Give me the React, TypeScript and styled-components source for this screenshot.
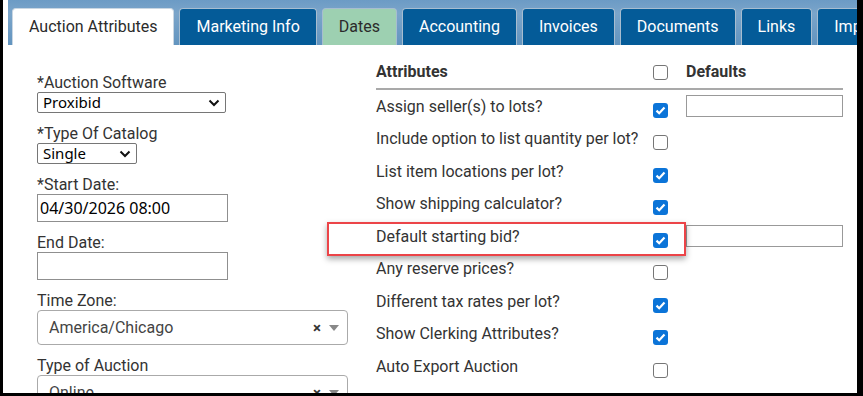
import React from 'react'
import styled, { createGlobalStyle } from 'styled-components'

const GlobalStyle = createGlobalStyle`
  html, body {
    margin: 0;
    padding: 0;
    background: #fff;
  }
  body {
    font-family: Roboto, "Liberation Sans", Arial, sans-serif;
    color: #333;
  }
  * {
    box-sizing: border-box;
  }
`

const tabs = [
  { label: 'Auction Attributes', kind: 'active' },
  { label: 'Marketing Info', kind: 'blue' },
  { label: 'Dates', kind: 'green' },
  { label: 'Accounting', kind: 'blue' },
  { label: 'Invoices', kind: 'blue' },
  { label: 'Documents', kind: 'blue' },
  { label: 'Links', kind: 'blue' },
  { label: 'Import', kind: 'blue' },
]

const attributes = [
  { label: 'Assign seller(s) to lots?', checked: true, input: true },
  { label: 'Include option to list quantity per lot?', checked: false },
  { label: 'List item locations per lot?', checked: true },
  { label: 'Show shipping calculator?', checked: true },
  { label: 'Default starting bid?', checked: true, input: true },
  { label: 'Any reserve prices?', checked: false },
  { label: 'Different tax rates per lot?', checked: true },
  { label: 'Show Clerking Attributes?', checked: true },
  { label: 'Auto Export Auction', checked: false },
]

const Chevron = () => (
  <svg width="12" height="8" viewBox="0 0 12 8">
    <path d="M1.5 1.5 L6 6 L10.5 1.5" fill="none" stroke="#111" strokeWidth="2" />
  </svg>
)

const Check = ({ checked }: { checked: boolean }) => (
  <CheckBox checked={checked}>
    {checked && (
      <svg width="11" height="9" viewBox="0 0 11 9">
        <path d="M1.5 4.6 L4.2 7.2 L9.5 1.6" fill="none" stroke="#fff" strokeWidth="2.2" />
      </svg>
    )}
  </CheckBox>
)

const App = () => {
  return (
    <Frame>
      <GlobalStyle />
      <TabBar>
        {tabs.map((t) => (
          <Tab key={t.label} kind={t.kind}>
            {t.label}
          </Tab>
        ))}
      </TabBar>
      <Content>
        <LeftCol>
          <Field>
            <Label>*Auction Software</Label>
            <SelectWrap>
              <NativeSelect w={189} defaultValue="Proxibid">
                <option>Proxibid</option>
              </NativeSelect>
              <ChevronSlot>
                <Chevron />
              </ChevronSlot>
            </SelectWrap>
          </Field>
          <Field>
            <Label>*Type Of Catalog</Label>
            <SelectWrap>
              <NativeSelect w={100} defaultValue="Single">
                <option>Single</option>
              </NativeSelect>
              <ChevronSlot>
                <Chevron />
              </ChevronSlot>
            </SelectWrap>
          </Field>
          <Field>
            <Label>*Start Date:</Label>
            <TextInput defaultValue="04/30/2026 08:00" />
          </Field>
          <Field>
            <Label>End Date:</Label>
            <TextInput defaultValue="" />
          </Field>
          <Field>
            <Label>Time Zone:</Label>
            <Select2>
              <Select2Text>America/Chicago</Select2Text>
              <Clear>×</Clear>
              <Caret />
            </Select2>
          </Field>
          <Field>
            <Label>Type of Auction</Label>
            <Select2>
              <Select2Text>Online</Select2Text>
              <Clear>×</Clear>
              <Caret />
            </Select2>
          </Field>
        </LeftCol>
        <RightCol>
          <HeaderRow>
            <HeadCell>Attributes</HeadCell>
            <BoxCell>
              <Check checked={false} />
            </BoxCell>
            <HeadCell>Defaults</HeadCell>
          </HeaderRow>
          {attributes.map((a) => (
            <AttrRow key={a.label}>
              <AttrText>{a.label}</AttrText>
              <BoxCell offset>
                <Check checked={a.checked} />
              </BoxCell>
              <div>{a.input && <DefaultInput />}</div>
            </AttrRow>
          ))}
        </RightCol>
        <Highlight />
      </Content>
    </Frame>
  )
}

const Frame = styled.div`
  width: 863px;
  height: 396px;
  overflow: hidden;
  background: #fff;
  border-left: 3px solid #000;
  border-right: 6px solid #000;
  border-bottom: 3px solid #000;
`

const TabBar = styled.div`
  display: flex;
  align-items: flex-end;
  gap: 5px;
  height: 45px;
  margin-left: 5px;
  padding: 8px 0 0 4px;
  overflow: hidden;
  background: linear-gradient(to bottom, #6c9bc5 0%, #7ba5ca 30%, #6294bf 100%);
`

const Tab = styled.div<{ kind: string }>`
  flex-shrink: 0;
  display: flex;
  align-items: center;
  height: 37px;
  padding: 0 16px 1px;
  border: 1px solid ${(p) => (p.kind === 'active' ? '#c9d6e2' : '#a7bdd0')};
  border-bottom: 0;
  border-radius: 4px 4px 0 0;
  font-size: 16px;
  white-space: nowrap;
  background: ${(p) =>
    p.kind === 'active' ? '#fff' : p.kind === 'green' ? '#9dd0b1' : '#045b98'};
  color: ${(p) => (p.kind === 'blue' ? '#fff' : '#2b2b2b')};
`

const Content = styled.div`
  position: relative;
  display: flex;
  padding: 17px 0 0 34px;
`

const LeftCol = styled.div`
  flex-shrink: 0;
  width: 311px;
  margin-right: 28px;
  padding-top: 11px;
`

const Field = styled.div`
  margin-bottom: 11px;
`

const Label = styled.div`
  font-size: 16px;
  line-height: 19px;
  color: #333;
`

const SelectWrap = styled.div`
  position: relative;
  display: inline-block;
`

const NativeSelect = styled.select<{ w: number }>`
  appearance: none;
  display: block;
  width: ${(p) => p.w}px;
  height: 21px;
  padding: 0 0 0 5px;
  border: 1px solid #767676;
  border-radius: 2px;
  background: #fff;
  color: #000;
  font-family: "Noto Sans", "DejaVu Sans", sans-serif;
  font-size: 15px;
  line-height: 19px;
`

const ChevronSlot = styled.span`
  position: absolute;
  right: 6px;
  top: 7px;
  display: flex;
  pointer-events: none;
`

const TextInput = styled.input`
  display: block;
  width: 191px;
  height: 28px;
  padding: 0 2px;
  border: 1px solid #8f8f8f;
  border-radius: 0;
  color: #000;
  font-family: "Noto Sans", "DejaVu Sans", sans-serif;
  font-size: 16px;
  outline: none;
`

const Select2 = styled.div`
  display: flex;
  align-items: center;
  width: 311px;
  height: 35px;
  padding: 0 8px 0 11px;
  border: 1px solid #aaa;
  border-radius: 4px;
  background: #fff;
`

const Select2Text = styled.span`
  flex: 1;
  font-size: 16px;
  color: #444;
`

const Clear = styled.span`
  font-size: 15px;
  font-weight: 700;
  color: #333;
  margin-right: 8px;
`

const Caret = styled.span`
  width: 0;
  height: 0;
  border-left: 5px solid transparent;
  border-right: 5px solid transparent;
  border-top: 6px solid #888;
`

const RightCol = styled.div`
  flex-shrink: 0;
  width: 467px;
`

const rowGrid = `
  display: grid;
  grid-template-columns: 277px 33px 157px;
`

const HeaderRow = styled.div`
  ${rowGrid}
  align-items: start;
  height: 28px;
  border-bottom: 2px solid #a9a9a9;
`

const HeadCell = styled.div`
  font-size: 16px;
  font-weight: 700;
  line-height: 19px;
  color: #333;
`

const AttrRow = styled.div`
  ${rowGrid}
  align-items: center;
  height: 32.5px;
`

const AttrText = styled.div`
  font-size: 16px;
  line-height: 19px;
  color: #333;
  white-space: nowrap;
`

const BoxCell = styled.div<{ offset?: boolean }>`
  display: flex;
  margin-top: ${(p) => (p.offset ? '8px' : '3px')};
`

const CheckBox = styled.span<{ checked: boolean }>`
  display: flex;
  align-items: center;
  justify-content: center;
  width: 15px;
  height: 15px;
  border-radius: 3px;
  border: ${(p) => (p.checked ? '0' : '1.5px solid #767676')};
  background: ${(p) => (p.checked ? '#0b74d8' : '#fff')};
`

const DefaultInput = styled.input`
  display: block;
  width: 157px;
  height: 22px;
  border: 1px solid #999;
  border-radius: 0;
  outline: none;
`

const Highlight = styled.div`
  position: absolute;
  left: 324px;
  top: 177px;
  width: 359px;
  height: 34px;
  border: 2.5px solid #ec4448;
  box-shadow: 0 3px 6px rgba(0, 0, 0, 0.35);
  pointer-events: none;
`

export default App
